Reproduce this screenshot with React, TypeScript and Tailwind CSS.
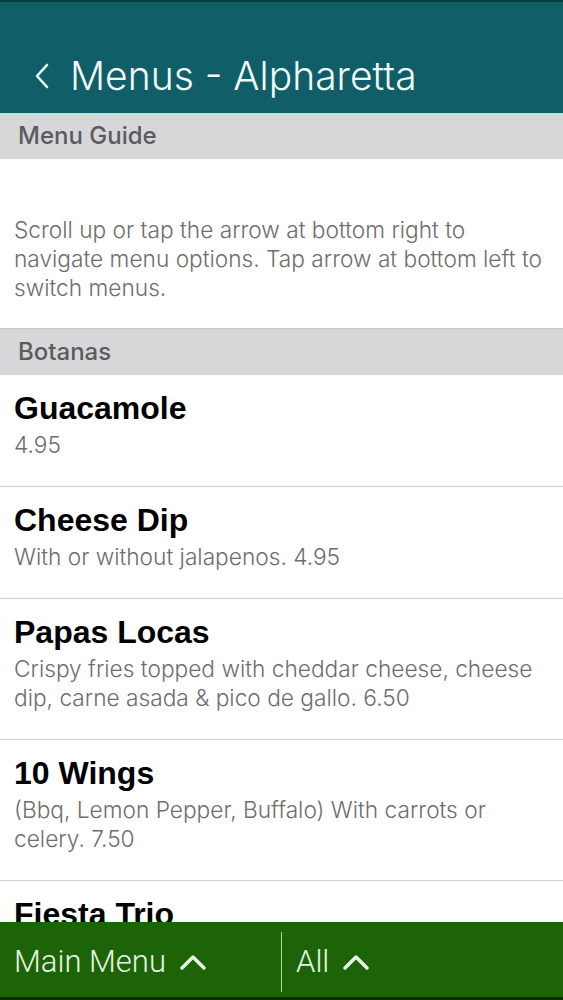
import { ReactNode } from 'react'

const items = [
  { name: 'Guacamole', desc: '4.95' },
  { name: 'Cheese Dip', desc: 'With or without jalapenos. 4.95' },
  { name: 'Papas Locas', desc: 'Crispy fries topped with cheddar cheese, cheese dip, carne asada & pico de gallo. 6.50' },
  { name: '10 Wings', desc: '(Bbq, Lemon Pepper, Buffalo) With carrots or celery. 7.50' },
  { name: 'Fiesta Trio', desc: 'Guacamole, cheese dip & salsa. 7.95' },
]

function SectionBar({ children }: { children: ReactNode }) {
  return (
    <div className="h-[46px] bg-[#d7d6d9] flex items-center px-[18px] text-[24px] font-medium text-[#5b5b5d] font-['Inter',sans-serif]">
      {children}
    </div>
  )
}

function ChevronUp() {
  return (
    <svg width="26" height="16" viewBox="0 0 26 16" fill="none">
      <polyline points="2,14 13,3 24,14" stroke="#e9f5e4" strokeWidth="3.5" strokeLinecap="round" strokeLinejoin="round" />
    </svg>
  )
}

export default function App() {
  return (
    <div className="h-[1000px] flex flex-col overflow-hidden bg-white font-['Inter',sans-serif]">
      {/* Header */}
      <div className="h-[113px] shrink-0 bg-[#105e67] border-t-2 border-[#0a3e44] flex items-center pl-[34px] pt-[36px]">
        <svg width="16" height="26" viewBox="0 0 16 26" fill="none">
          <polyline points="13,2 3,13 13,24" stroke="#f2fafa" strokeWidth="2.6" strokeLinecap="round" strokeLinejoin="round" />
        </svg>
        <span className="ml-[20px] text-[39px] font-light text-[#f2fafa] leading-none">Menus - Alpharetta</span>
      </div>

      <div className="flex-1 overflow-hidden">
        <SectionBar>Menu Guide</SectionBar>
        <p className="pt-[56px] pb-[26px] px-[14px] text-[22.7px] leading-[29px] font-light text-[#6e6e6e]">
          Scroll up or tap the arrow at bottom right to navigate menu options. Tap arrow at bottom left to switch menus.
        </p>
        <div className="border-t border-[#c9c8cb]">
          <SectionBar>Botanas</SectionBar>
        </div>
        {items.map(item => (
          <div key={item.name} className="pt-[15px] pb-[27px] px-[14px] border-b border-[#cfcfd2]">
            <div className="text-[32px] leading-[36px] font-bold text-black font-['Liberation_Sans',Arial,sans-serif]">{item.name}</div>
            <div className="mt-[4px] text-[22.7px] leading-[29px] font-light text-[#6e6e6e]">{item.desc}</div>
          </div>
        ))}
      </div>

      {/* Footer */}
      <div className="h-[78px] shrink-0 bg-[#1d6408] border-b-[3px] border-[#0c2a05] flex items-center pt-[4px] font-['Roboto',sans-serif]">
        <div className="w-[281px] flex items-center pl-[14px] gap-[14px]">
          <span className="text-[31px] leading-none font-light text-[#e9f5e4]">Main Menu</span>
          <ChevronUp />
        </div>
        <div className="w-px h-[60px] bg-[#b9d3ae]" />
        <div className="flex items-center pl-[14px] gap-[14px]">
          <span className="text-[31px] leading-none font-light text-[#e9f5e4]">All</span>
          <ChevronUp />
        </div>
      </div>
    </div>
  )
}
